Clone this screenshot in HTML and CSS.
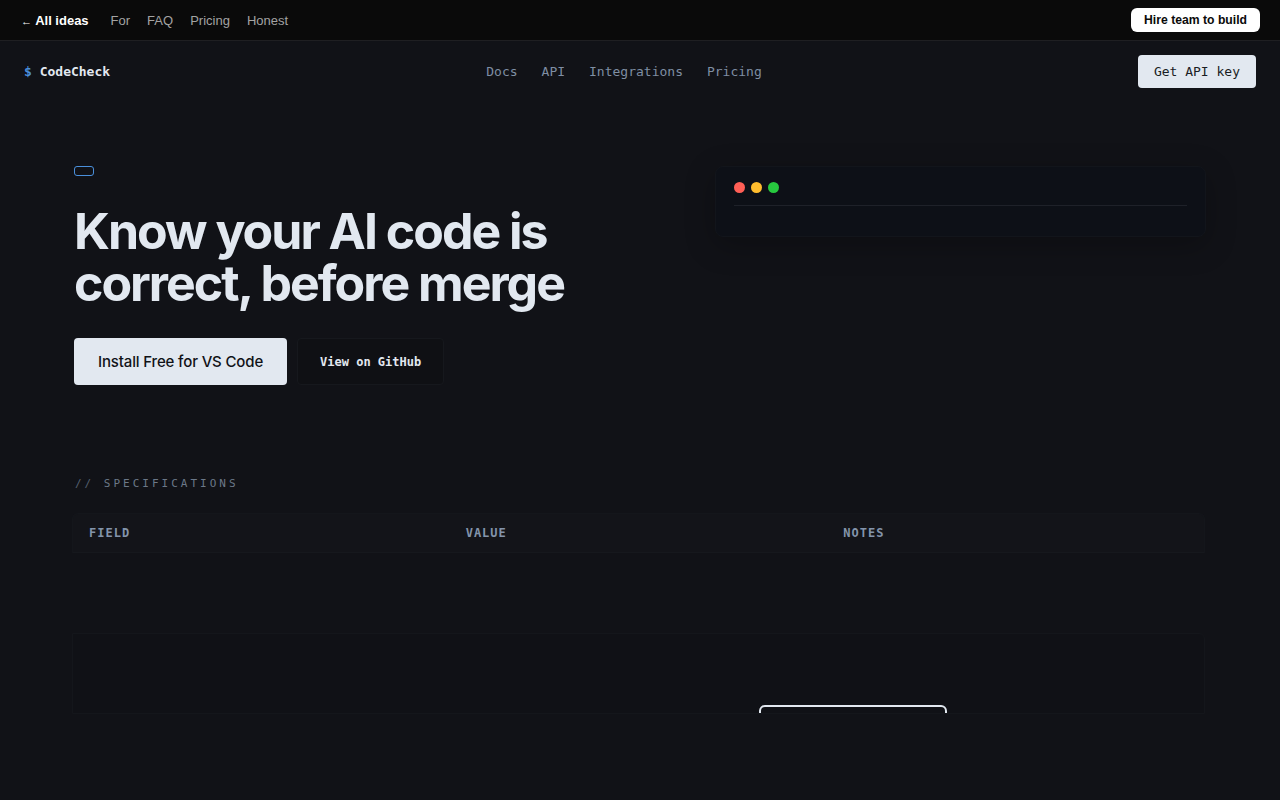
FILE: index.html
```html
<!DOCTYPE html>
<html lang="en">
<head>
    <meta charset="UTF-8">
    <meta name="viewport" content="width=device-width, initial-scale=1.0">
    <title>CodeCheck - Know your AI code is correct</title>
    <link rel="stylesheet" href="styles.css">
</head>
<body>
    <div class="topbar">
        <div class="topbar-links">
            <a href="#" class="back"><span class="arrow">←</span> All ideas</a>
            <a href="#">For</a>
            <a href="#">FAQ</a>
            <a href="#">Pricing</a>
            <a href="#">Honest</a>
        </div>
        <a href="#" class="hire-btn">Hire team to build</a>
    </div>

    <nav class="nav">
        <div class="logo"><span class="prompt">$</span> CodeCheck</div>
        <div class="nav-links">
            <a href="#">Docs</a>
            <a href="#">API</a>
            <a href="#">Integrations</a>
            <a href="#">Pricing</a>
        </div>
        <a href="#" class="btn-key">Get API key</a>
    </nav>

    <main class="container">
        <section class="hero">
            <div class="hero-text">
                <span class="badge"></span>
                <h1>Know your AI code is correct, before merge</h1>
                <div class="hero-actions">
                    <a href="#" class="btn btn-primary">Install Free for VS Code</a>
                    <a href="#" class="btn btn-ghost">View on GitHub</a>
                </div>
            </div>
            <div class="terminal">
                <div class="terminal-bar">
                    <span class="dot red"></span>
                    <span class="dot yellow"></span>
                    <span class="dot green"></span>
                </div>
                <div class="terminal-body"></div>
            </div>
        </section>

        <section class="specs">
            <div class="section-label"><span class="slashes">//</span> SPECIFICATIONS</div>
            <table class="spec-table">
                <thead>
                    <tr>
                        <th>Field</th>
                        <th>Value</th>
                        <th>Notes</th>
                    </tr>
                </thead>
                <tbody>
                    <tr class="empty-row">
                        <td></td>
                        <td></td>
                        <td></td>
                    </tr>
                </tbody>
            </table>
            <div class="cta-card">
                <a href="#" class="btn-outline"></a>
            </div>
        </section>
    </main>
</body>
</html>
```

FILE: styles.css
```css
* {
    margin: 0;
    padding: 0;
    box-sizing: border-box;
}

body {
    font-family: Inter, 'Liberation Sans', Arial, sans-serif;
    background: #111217;
    color: #e2e8f0;
    min-height: 100vh;
}

a {
    text-decoration: none;
    color: inherit;
}

/* top strip */
.topbar {
    height: 41px;
    background: #0a0a0a;
    border-bottom: 1px solid #1f1f22;
    display: flex;
    align-items: center;
    justify-content: space-between;
    padding: 0 20px 0 21px;
    font-family: 'Liberation Sans', Arial, sans-serif;
    font-size: 13px;
}

.topbar-links {
    display: flex;
    align-items: center;
    gap: 17px;
}

.topbar-links a {
    color: #a3a3a3;
}

.topbar-links .back {
    color: #ffffff;
    font-weight: bold;
    margin-right: 5px;
}

.back .arrow {
    font-size: 11px;
    font-weight: normal;
}

.hire-btn {
    background: #ffffff;
    color: #0a0a0a;
    font-size: 12.2px;
    font-weight: bold;
    padding: 5px 13px;
    border-radius: 6px;
    line-height: 14px;
}

/* main nav */
.nav {
    display: flex;
    align-items: center;
    justify-content: space-between;
    padding: 14px 24px;
    font-family: 'DejaVu Sans Mono', monospace;
    font-size: 13px;
}

.logo {
    font-weight: bold;
    color: #e2e8f0;
}

.logo .prompt {
    color: #4a8fdb;
}

.nav-links {
    display: flex;
    gap: 24px;
}

.nav-links a {
    color: #7f8ea3;
}

.btn-key {
    background: #e2e8f0;
    color: #1a1d24;
    padding: 8px 16px;
    border-radius: 4px;
    line-height: 17px;
}

/* hero */
.container {
    max-width: 1132px;
    margin: 0 auto;
}

.hero {
    display: grid;
    grid-template-columns: 1fr 491px;
    gap: 50px;
    padding-top: 64px;
}

.badge {
    display: block;
    width: 20px;
    height: 10px;
    border: 1px solid #4a8fdb;
    border-radius: 3px;
    margin-bottom: 29px;
}

h1 {
    font-size: 50px;
    line-height: 52px;
    font-weight: 700;
    letter-spacing: -0.04em;
    color: #e2e8f0;
    max-width: 540px;
}

.hero-actions {
    display: flex;
    gap: 10px;
    margin-top: 29px;
}

.btn {
    display: inline-flex;
    align-items: center;
    height: 47px;
    border-radius: 4px;
}

.btn-primary {
    background: #e2e8f0;
    color: #111217;
    font-size: 15px;
    font-weight: 500;
    letter-spacing: -0.01em;
    padding: 0 24px;
}

.btn-ghost {
    font-family: 'DejaVu Sans Mono', monospace;
    font-size: 12px;
    font-weight: bold;
    color: #e2e8f0;
    padding: 0 22px;
    background: #0f1014;
    border: 1px solid #16181d;
}

.terminal {
    align-self: start;
    background: #0d1017;
    border: 1px solid #12151b;
    border-radius: 8px;
    padding: 15px 18px 0;
    box-shadow: 0 8px 30px rgba(0, 0, 0, 0.25);
}

.terminal-bar {
    display: flex;
    gap: 6px;
    padding-bottom: 12px;
    border-bottom: 1px solid #1e2129;
}

.dot {
    width: 11px;
    height: 11px;
    border-radius: 50%;
}

.dot.red { background: #ff5f56; }
.dot.yellow { background: #ffbd2e; }
.dot.green { background: #27c93f; }

.terminal-body {
    height: 30px;
}

/* specs */
.specs {
    margin-top: 92px;
}

.section-label {
    font-family: 'DejaVu Sans Mono', monospace;
    font-size: 11px;
    letter-spacing: 3px;
    color: #6b7888;
    margin-bottom: 23px;
    padding-left: 1px;
}

.section-label .slashes {
    color: #556070;
}

.spec-table {
    width: 1133px;
    margin-left: -2px;
    border-collapse: separate;
    border-spacing: 0;
    table-layout: fixed;
}

.spec-table th {
    background: #131419;
    font-family: 'DejaVu Sans Mono', monospace;
    font-size: 12px;
    font-weight: bold;
    letter-spacing: 1px;
    text-transform: uppercase;
    text-align: left;
    color: #8394ab;
    padding: 12px 16px;
    line-height: 14px;
    border-top: 1px solid #14161b;
    border-bottom: 1px solid #16181d;
}

.spec-table th:first-child {
    border-left: 1px solid #14161b;
    border-top-left-radius: 6px;
}

.spec-table th:last-child {
    border-right: 1px solid #14161b;
    border-top-right-radius: 6px;
}

.empty-row td {
    height: 80px;
}

.cta-card {
    width: 1133px;
    margin-left: -2px;
    height: 81px;
    overflow: hidden;
    background: #101116;
    border: 1px solid #14161b;
    border-radius: 0 6px 0 0;
    padding: 71px 0 0 686px;
}

.btn-outline {
    display: block;
    width: 188px;
    height: 44px;
    border: 2px solid #e2e8f0;
    border-radius: 6px;
}
```
